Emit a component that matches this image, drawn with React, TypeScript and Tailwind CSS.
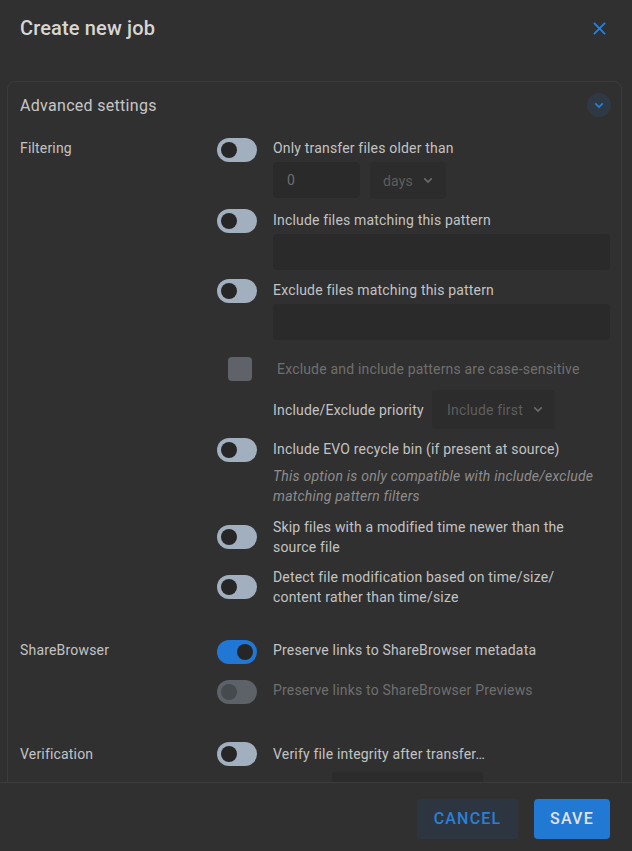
import React from "react";

function Toggle({ on = false, disabled = false }: { on?: boolean; disabled?: boolean }) {
  const track = disabled ? "bg-[#5c6268]" : on ? "bg-[#2178d4]" : "bg-[#a2afbf]";
  const knob = disabled ? "bg-[#454a4f]" : "bg-[#262626]";
  return (
    <div className={`relative w-10 h-6 shrink-0 rounded-full ${track}`}>
      <div className={`absolute top-1 w-4 h-4 rounded-full ${knob} ${on ? "left-[20px]" : "left-1"}`} />
    </div>
  );
}

function Chevron({ className = "" }: { className?: string }) {
  return (
    <svg viewBox="0 0 12 8" className={className} fill="none" stroke="currentColor" strokeWidth="2">
      <path d="M1.5 1.5 L6 6 L10.5 1.5" />
    </svg>
  );
}

export default function App() {
  return (
    <div className="w-[632px] h-[851px] bg-[#303030] flex flex-col overflow-hidden font-['Roboto',sans-serif] text-[14px] text-[#c3c3c3] tracking-[0.18px]">
      {/* header */}
      <div className="h-[56px] shrink-0 flex items-center justify-between pl-5 pr-[26px]">
        <div className="text-[20px] font-medium text-[#d6d6d6] leading-7 tracking-[0.15px]">Create new job</div>
        <svg viewBox="0 0 14 14" className="w-[13px] h-[13px] text-[#2a80d8]" fill="none" stroke="currentColor" strokeWidth="2">
          <path d="M1 1 L13 13 M13 1 L1 13" />
        </svg>
      </div>

      {/* content */}
      <div className="flex-1 overflow-hidden pt-[25px] pl-[7px] pr-[10px]">
        <div className="border border-[#3b3b3b] rounded-lg">
          <div className="h-[46px] flex items-center justify-between pl-3 pr-[10px]">
            <div className="text-[16px] text-[#c6c6c6] tracking-[0.3px] pt-[2px]">Advanced settings</div>
            <div className="w-6 h-6 rounded-full bg-[#2f3945] flex items-center justify-center text-[#2a80d8]">
              <Chevron className="w-[10px] h-[7px]" />
            </div>
          </div>

          <div className="pl-3 pr-[11px] pt-[10px] pb-10 leading-5">
            {/* Filtering */}
            <div className="flex">
              <div className="w-[197px] shrink-0">Filtering</div>
              <div className="flex-1 flex flex-col">
                <div className="flex items-start gap-4">
                  <Toggle />
                  <div className="flex flex-col">
                    <div>Only transfer files older than</div>
                    <div className="flex mt-1 gap-[10px]">
                      <div className="w-[87px] h-9 rounded bg-[#2a2a2a] flex items-center pl-[14px] text-[#6e6e6e]">0</div>
                      <div className="w-[76px] h-[37px] rounded bg-[#2c2c2c] flex items-center pl-[13px] gap-[10px] text-[#5e5e5e]">
                        days
                        <Chevron className="w-[10px] h-[7px] text-[#6a6a6a]" />
                      </div>
                    </div>
                  </div>
                </div>

                <div className="flex items-start gap-4 mt-[10px]">
                  <Toggle />
                  <div className="flex flex-col flex-1 pt-px">
                    <div>Include files matching this pattern</div>
                    <div className="mt-1 h-9 rounded bg-[#2a2a2a]" />
                  </div>
                </div>

                <div className="flex items-start gap-4 mt-[9px]">
                  <Toggle />
                  <div className="flex flex-col flex-1 pt-px">
                    <div>Exclude files matching this pattern</div>
                    <div className="mt-1 h-9 rounded bg-[#2a2a2a]" />
                  </div>
                </div>

                <div className="flex items-center gap-4 mt-[17px]">
                  <div className="w-10 h-6 shrink-0 flex justify-center">
                    <div className="w-6 h-6 ml-[6px] rounded-[4px] bg-[#5f6268]" />
                  </div>
                  <div className="pl-1 text-[#6f6f6f] -mt-px">Exclude and include patterns are case-sensitive</div>
                </div>

                <div className="flex items-center mt-[9px] pl-14">
                  <div className="w-[159px] shrink-0">Include/Exclude priority</div>
                  <div className="w-[123px] h-[39px] rounded bg-[#2c2c2c] flex items-center pl-[15px] gap-[10px] text-[#5e5e5e]">
                    Include first
                    <Chevron className="w-[10px] h-[7px] text-[#6a6a6a]" />
                  </div>
                </div>

                <div className="flex items-start gap-4 mt-[9px]">
                  <Toggle />
                  <div className="flex flex-col pt-px">
                    <div>Include EVO recycle bin (if present at source)</div>
                    <div className="mt-[7px] italic text-[#8d8d8d] tracking-[0.22px]">
                      This option is only compatible with include/exclude
                      <br />
                      matching pattern filters
                    </div>
                  </div>
                </div>

                <div className="flex items-center gap-4 mt-[11px]">
                  <Toggle />
                  <div>
                    Skip files with a modified time newer than the
                    <br />
                    source file
                  </div>
                </div>

                <div className="flex items-center gap-4 mt-[10px]">
                  <Toggle />
                  <div>
                    Detect file modification based on time/size/
                    <br />
                    content rather than time/size
                  </div>
                </div>
              </div>
            </div>

            {/* ShareBrowser */}
            <div className="flex mt-[33px]">
              <div className="w-[197px] shrink-0">ShareBrowser</div>
              <div className="flex-1 flex flex-col">
                <div className="flex items-start gap-4">
                  <Toggle on />
                  <div>Preserve links to ShareBrowser metadata</div>
                </div>
                <div className="flex items-start gap-4 mt-4">
                  <Toggle disabled />
                  <div className="text-[#6f6f6f]">Preserve links to ShareBrowser Previews</div>
                </div>
              </div>
            </div>

            {/* Verification */}
            <div className="flex mt-[38px]">
              <div className="w-[197px] shrink-0 pt-[2px]">Verification</div>
              <div className="flex-1 flex flex-col">
                <div className="flex items-start gap-4">
                  <Toggle />
                  <div className="pt-[2px]">Verify file integrity after transfer…</div>
                </div>
                <div className="mt-[6px] ml-[115px] w-[151px] h-9 rounded bg-[#2b2b2b]" />
              </div>
            </div>
          </div>
        </div>
      </div>

      {/* footer */}
      <div className="h-[69px] shrink-0 border-t border-[#3c3c3c] flex justify-end items-start pt-4 pr-[22px] gap-4">
        <div className="w-[101px] h-10 rounded bg-[#2d3640] flex items-center justify-center text-[#2a80d8] text-[16px] font-medium tracking-[1.2px]">
          CANCEL
        </div>
        <div className="w-[76px] h-10 rounded bg-[#2279d4] flex items-center justify-center text-[#e2e2e2] text-[16px] font-medium tracking-[1.2px]">
          SAVE
        </div>
      </div>
    </div>
  );
}
